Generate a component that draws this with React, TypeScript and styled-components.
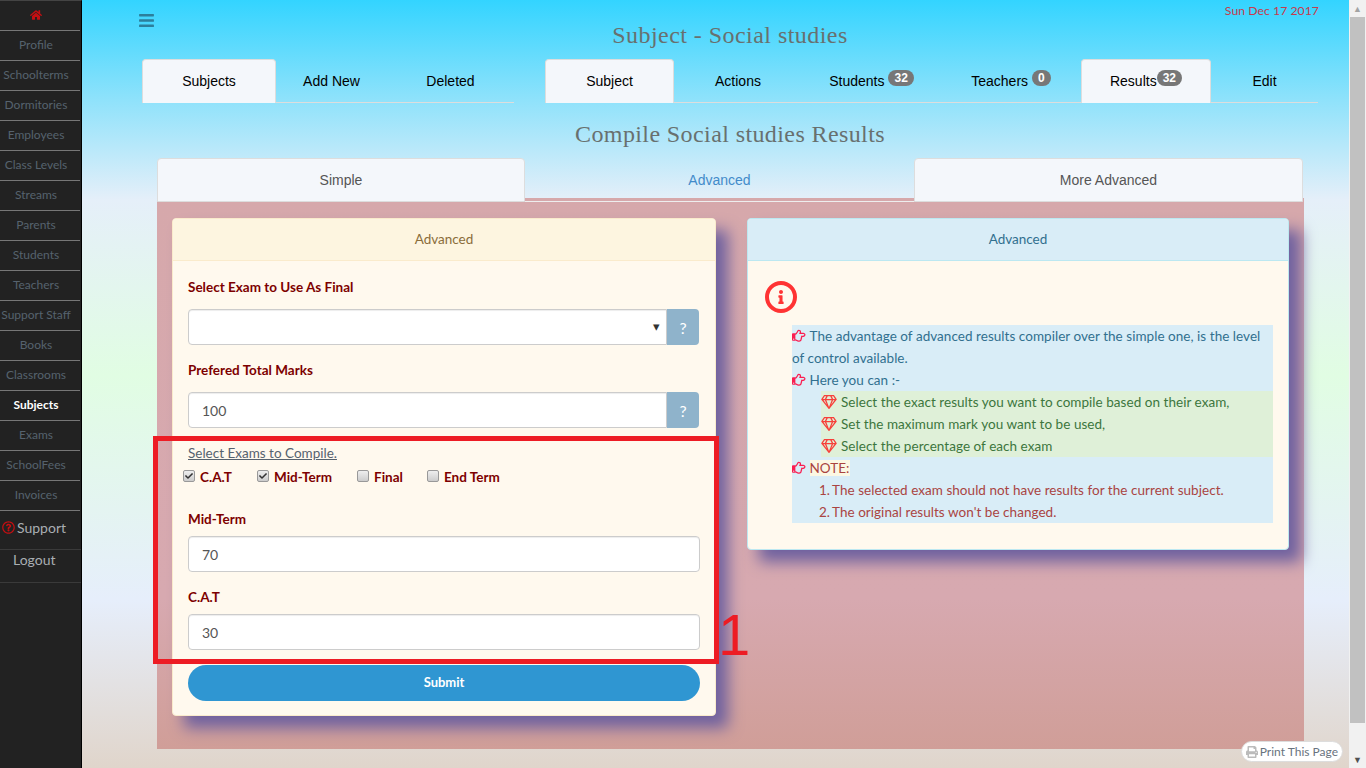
import React from "react";
import styled, { createGlobalStyle } from "styled-components";
import {
  FaBars,
  FaCheck,
  FaHome,
  FaInfo,
  FaPrint,
  FaRegGem,
  FaRegHandPointRight,
  FaRegQuestionCircle,
} from "react-icons/fa";

const bodyFont = `"Lato", "Noto Sans", sans-serif`;
const titleFont = `"Liberation Serif", serif`;
const tabFont = `"Liberation Sans", Arial, sans-serif`;

const GlobalStyle = createGlobalStyle`
  html, body {
    margin: 0;
    height: 100%;
    overflow: hidden;
    font-family: ${bodyFont};
    font-size: 13.5px;
  }
  * { box-sizing: border-box; }
`;

const Page = styled.div`
  display: flex;
  position: relative;
  width: 1366px;
  height: 768px;
  overflow: hidden;
  background: linear-gradient(
    180deg,
    #33d4ff 0,
    #8fe2fb 100px,
    #e5eff9 200px,
    #e1fde3 375px,
    #e6eefb 600px,
    #e0d5cb 768px
  );
`;

const Sidebar = styled.nav`
  flex: 0 0 82px;
  height: 768px;
  background: #222;
  border-top: 1px solid #444;
  border-right: 1px solid #000;
`;

const NavItem = styled.div<{ $active?: boolean }>`
  display: flex;
  align-items: center;
  justify-content: center;
  height: 30px;
  padding: 0 8px 2px 0;
  margin-right: 1px;
  border-bottom: 1px solid #777;
  color: ${(p) => (p.$active ? "#fff" : "#56626e")};
  font-size: 12px;
  font-weight: ${(p) => (p.$active ? 700 : 400)};
  white-space: nowrap;
`;

const HomeItem = styled(NavItem)`
  color: #c40f12;
`;

const BigNavItem = styled.div<{ $h: number; $left: number; $bottom: number }>`
  display: flex;
  align-items: center;
  gap: 2px;
  height: ${(p) => p.$h}px;
  padding: 0 0 ${(p) => p.$bottom}px ${(p) => p.$left}px;
  border-bottom: 1px solid #3a3a3a;
  color: #a9aeb2;
  font-size: 14px;
  svg { color: #c40f12; font-size: 13px; }
`;

const Main = styled.main`
  flex: 1;
  padding: 0 31px 0 60px;
  min-width: 0;
`;

const HeaderRow = styled.header`
  display: grid;
  grid-template-columns: 1fr auto 1fr;
  height: 59px;
`;

const MenuButton = styled.div`
  margin: 12px 0 0 -4px;
  color: #2c7f9c;
  font-size: 17px;
`;

const PageTitle = styled.h2`
  margin: 0;
  padding-top: 20px;
  color: #68706f;
  font-family: ${titleFont};
  font-size: 24px;
  font-weight: 400;
  line-height: 30px;
  letter-spacing: 0.45px;
`;

const DateText = styled.div`
  padding-top: 2px;
  margin-right: -1px;
  color: #c63b4d;
  font-size: 12.3px;
  line-height: 18px;
  text-align: right;
`;

const TabRow = styled.div`
  display: flex;
  gap: 31px;
`;

const TabGroup = styled.div<{ $cols: string }>`
  display: grid;
  grid-template-columns: ${(p) => p.$cols};
  height: 44px;
`;

const Tab = styled.div<{ $active?: boolean }>`
  display: flex;
  align-items: center;
  justify-content: center;
  border-bottom: 1px solid #ddd;
  color: #000;
  font-family: ${tabFont};
  font-size: 14px;
  ${(p) =>
    p.$active &&
    `
    padding-bottom: 2px;
    background: #f4f7fb;
    border: 1px solid #ddd;
    border-bottom: none;
    border-radius: 4px 4px 0 0;
  `}
`;

const Badge = styled.span<{ $gap?: number }>`
  margin: -6px 0 0 ${(p) => p.$gap ?? 4}px;
  padding: 2px 6px;
  border-radius: 10px;
  background: #777;
  color: #fff;
  font-size: 12px;
  font-weight: 700;
  line-height: 12px;
`;

const SectionTitle = styled.h3`
  margin: 0;
  height: 55px;
  padding-top: 16px;
  color: #68706f;
  font-family: ${titleFont};
  font-size: 24px;
  font-weight: 400;
  line-height: 30px;
  letter-spacing: 0.4px;
  text-align: center;
`;

const ModeSection = styled.section`
  margin: 0 14px 0 15px;
`;

const ModeTabs = styled.div`
  position: relative;
  z-index: 1;
  display: grid;
  grid-template-columns: 368px 389px 389px;
  height: 44px;
  margin-bottom: -4px;
  margin-right: 1px;
`;

const ModeTab = styled.div<{ $active?: boolean }>`
  display: flex;
  align-items: center;
  justify-content: center;
  padding-bottom: 1px;
  border: 1px solid #ddd;
  border-radius: 4px 4px 0 0;
  background: #f4f7fb;
  color: #555;
  font-family: ${tabFont};
  font-size: 14px;
  ${(p) =>
    p.$active &&
    `
    padding: 1px 0 0;
    background: transparent;
    border-width: 0 0 1px;
    border-color: #eee;
    border-radius: 0;
    color: #428bca;
  `}
`;

const ModePanel = styled.div`
  display: grid;
  grid-template-columns: 544px 542px;
  gap: 31px;
  align-items: start;
  height: 551px;
  padding: 20px 15px;
  background: linear-gradient(180deg, #d6a8ab 0, #d7a9b0 400px, #d09e98 551px);
`;

const Card = styled.div<{ $tone: "warning" | "info" }>`
  border: 1px solid ${(p) => (p.$tone === "info" ? "#bce8f1" : "#faebcc")};
  border-radius: 4px;
  background: #fff9ee;
  box-shadow: 12px 12px 15px #6f619f;
  overflow: hidden;
`;

const CardHead = styled.div<{ $tone: "warning" | "info" }>`
  height: 42px;
  padding-top: 11px;
  border-bottom: 1px solid ${(p) => (p.$tone === "info" ? "#bce8f1" : "#faebcc")};
  background: ${(p) => (p.$tone === "info" ? "#d9edf7" : "#fdf5e0")};
  color: ${(p) => (p.$tone === "info" ? "#31708f" : "#8a6d3b")};
  line-height: 18px;
  text-align: center;
`;

const FormBody = styled.div`
  display: flex;
  flex-direction: column;
  padding: 16px 15px 14px;
`;

const FieldLabel = styled.label<{ $gap?: number; $after?: number }>`
  margin-top: ${(p) => p.$gap ?? 0}px;
  margin-bottom: ${(p) => p.$after ?? 12}px;
  color: #7d0000;
  font-weight: 700;
  line-height: 20px;
`;

const InputGroup = styled.div`
  position: relative;
  display: flex;
  height: 36px;
  margin-right: 1px;
`;

const TextInput = styled.input`
  flex: none;
  min-width: 0;
  height: 36px;
  padding: 0 13px;
  border: 1px solid #ccc;
  border-radius: 4px;
  outline: none;
  background: #fff;
  box-shadow: inset 0 1px 1px rgba(0, 0, 0, 0.075);
  color: #555;
  font: 14px ${bodyFont};
`;

const JoinedInput = styled(TextInput)`
  flex: 1;
  border-radius: 4px 0 0 4px;
`;

const SelectArrow = styled.span`
  position: absolute;
  right: 39px;
  top: 9px;
  color: #333;
  font-size: 13px;
`;

const HelpAddon = styled.div`
  display: flex;
  align-items: center;
  justify-content: center;
  width: 32px;
  border-radius: 0 4px 4px 0;
  background: #8fb3cb;
  color: #fff;
  font-size: 16px;
  font-weight: 400;
`;

const CompileLink = styled.a`
  margin-top: 15px;
  color: #56626e;
  line-height: 20px;
  text-decoration: underline;
`;

const CheckRow = styled.div`
  display: flex;
  height: 20px;
  margin: 4px 0 0 -5px;
`;

const CheckItem = styled.label<{ $width: number }>`
  display: flex;
  align-items: center;
  gap: 5px;
  width: ${(p) => p.$width}px;
  color: #7d0000;
  font-weight: 700;
`;

const CheckBox = styled.span`
  display: flex;
  align-items: center;
  justify-content: center;
  width: 12px;
  height: 12px;
  margin-top: -3px;
  border: 1px solid #999;
  border-radius: 2px;
  background: linear-gradient(180deg, #eee, #ccc);
  color: #333;
  font-size: 8px;
`;

const SubmitButton = styled.button`
  flex: none;
  height: 36px;
  margin-top: 15px;
  padding: 0 0 2px;
  border: none;
  border-radius: 18px;
  background: #2f96d2;
  color: #fff;
  font: 700 13px ${bodyFont};
`;

const InfoBody = styled.div`
  padding: 20px 15px 26px 17px;
`;

const InfoMark = styled.div`
  display: flex;
  align-items: center;
  justify-content: center;
  width: 32px;
  height: 32px;
  margin-bottom: 12px;
  border: 4px solid #ff3333;
  border-radius: 50%;
  color: #ff3333;
  font-size: 14px;
`;

const InfoList = styled.div`
  margin-left: 27px;
  background: #d9edf7;
  color: #31708f;
  line-height: 22px;
  letter-spacing: 0.04px;
`;

const Hand = styled(FaRegHandPointRight)`
  color: #fa1e50;
  vertical-align: -1px;
  margin-right: 4px;
`;

const GemList = styled.div`
  margin-left: 29px;
  background: #dff0d8;
  color: #3c763d;
`;

const Gem = styled(FaRegGem)`
  width: 16px;
  height: 14px;
  color: #f7403a;
  vertical-align: -2px;
  margin-right: 4px;
`;

const NoteTag = styled.span`
  background: #fcf8e3;
  color: #a9443f;
`;

const NoteLine = styled.div`
  display: flex;
  padding-left: 26px;
  color: #a94442;
`;

const NoteNumber = styled.span`
  width: 14px;
  padding-right: 2px;
  text-align: right;
`;

const PrintButton = styled.div`
  position: absolute;
  right: 23px;
  bottom: 6px;
  display: flex;
  align-items: center;
  gap: 2px;
  height: 21px;
  padding: 0 4px 0 4px;
  border: 1px solid #ddd;
  border-radius: 11px;
  background: #fff;
  color: #68727e;
  font-size: 12px;
  svg { color: #bbb; }
`;

const Scrollbar = styled.div`
  display: flex;
  flex-direction: column;
  flex: 0 0 17px;
  align-items: center;
  background: #f1f1f1;
`;

const ScrollArrow = styled.div<{ $down?: boolean }>`
  display: flex;
  align-items: center;
  justify-content: center;
  flex: 0 0 17px;
  color: ${(p) => (p.$down ? "#505050" : "#a3a3a3")};
  font-size: 9px;
`;

const ScrollThumb = styled.div`
  width: 15px;
  flex: 0 0 706px;
  background: #c1c1c1;
`;

const Spacer = styled.div`
  flex: 1;
`;

const Callout = styled.div`
  position: absolute;
  left: 153px;
  top: 436px;
  width: 566px;
  height: 228px;
  border: 5px solid #ed1c24;
  pointer-events: none;
`;

const CalloutNumber = styled.span`
  position: absolute;
  left: 718px;
  top: 603px;
  color: #ed1c24;
  font-family: ${tabFont};
  font-size: 58px;
  line-height: 64px;
`;

const navItems = [
  "Profile", "Schoolterms", "Dormitories", "Employees", "Class Levels", "Streams", "Parents",
  "Students", "Teachers", "Support Staff", "Books", "Classrooms", "Subjects", "Exams",
  "SchoolFees", "Invoices",
];

const exams = [
  { name: "C.A.T", width: 74, checked: true },
  { name: "Mid-Term", width: 100, checked: true },
  { name: "Final", width: 70, checked: false },
  { name: "End Term", width: 90, checked: false },
];

export default function App() {
  return (
    <Page>
      <GlobalStyle />
      <Sidebar>
        <HomeItem><FaHome /></HomeItem>
        {navItems.map((item) => (
          <NavItem key={item} $active={item === "Subjects"}>{item}</NavItem>
        ))}
        <BigNavItem $h={39} $left={2} $bottom={5}><FaRegQuestionCircle />Support</BigNavItem>
        <BigNavItem $h={33} $left={13} $bottom={13}>Logout</BigNavItem>
      </Sidebar>

      <Main>
        <HeaderRow>
          <MenuButton><FaBars /></MenuButton>
          <PageTitle>Subject - Social studies</PageTitle>
          <DateText>Sun Dec 17 2017</DateText>
        </HeaderRow>

        <TabRow>
          <TabGroup $cols="134px 111px 127px">
            <Tab $active>Subjects</Tab>
            <Tab>Add New</Tab>
            <Tab>Deleted</Tab>
          </TabGroup>
          <TabGroup $cols="129px 128px 139px 140px 130px 107px">
            <Tab $active>Subject</Tab>
            <Tab>Actions</Tab>
            <Tab>Students<Badge>32</Badge></Tab>
            <Tab>Teachers<Badge>0</Badge></Tab>
            <Tab $active>Results<Badge $gap={0}>32</Badge></Tab>
            <Tab>Edit</Tab>
          </TabGroup>
        </TabRow>

        <SectionTitle>Compile Social studies Results</SectionTitle>

        <ModeSection>
          <ModeTabs>
            <ModeTab>Simple</ModeTab>
            <ModeTab $active>Advanced</ModeTab>
            <ModeTab>More Advanced</ModeTab>
          </ModeTabs>
          <ModePanel>
            <Card $tone="warning">
              <CardHead $tone="warning">Advanced</CardHead>
              <FormBody>
                <FieldLabel>Select Exam to Use As Final</FieldLabel>
                <InputGroup>
                  <JoinedInput readOnly value="" />
                  <SelectArrow>▾</SelectArrow>
                  <HelpAddon>?</HelpAddon>
                </InputGroup>
                <FieldLabel $gap={15}>Prefered Total Marks</FieldLabel>
                <InputGroup>
                  <JoinedInput readOnly value="100" />
                  <HelpAddon>?</HelpAddon>
                </InputGroup>
                <CompileLink>Select Exams to Compile.</CompileLink>
                <CheckRow>
                  {exams.map((exam) => (
                    <CheckItem key={exam.name} $width={exam.width}>
                      <CheckBox>{exam.checked && <FaCheck />}</CheckBox>
                      {exam.name}
                    </CheckItem>
                  ))}
                </CheckRow>
                <FieldLabel $gap={22} $after={7}>Mid-Term</FieldLabel>
                <TextInput readOnly value="70" />
                <FieldLabel $gap={15} $after={7}>C.A.T</FieldLabel>
                <TextInput readOnly value="30" />
                <SubmitButton>Submit</SubmitButton>
              </FormBody>
            </Card>

            <Card $tone="info">
              <CardHead $tone="info">Advanced</CardHead>
              <InfoBody>
                <InfoMark><FaInfo /></InfoMark>
                <InfoList>
                  <div><Hand />The advantage of advanced results compiler over the simple one, is the level of control available.</div>
                  <div><Hand />Here you can :-</div>
                  <GemList>
                    <div><Gem />Select the exact results you want to compile based on their exam,</div>
                    <div><Gem />Set the maximum mark you want to be used,</div>
                    <div><Gem />Select the percentage of each exam</div>
                  </GemList>
                  <div><Hand /><NoteTag>NOTE:</NoteTag></div>
                  <NoteLine><NoteNumber>1.</NoteNumber>The selected exam should not have results for the current subject.</NoteLine>
                  <NoteLine><NoteNumber>2.</NoteNumber>The original results won't be changed.</NoteLine>
                </InfoList>
              </InfoBody>
            </Card>
          </ModePanel>
        </ModeSection>
      </Main>

      <Scrollbar>
        <ScrollArrow>▲</ScrollArrow>
        <ScrollThumb />
        <Spacer />
        <ScrollArrow $down>▼</ScrollArrow>
      </Scrollbar>

      <PrintButton><FaPrint />Print This Page</PrintButton>
      <Callout />
      <CalloutNumber>1</CalloutNumber>
    </Page>
  );
}
